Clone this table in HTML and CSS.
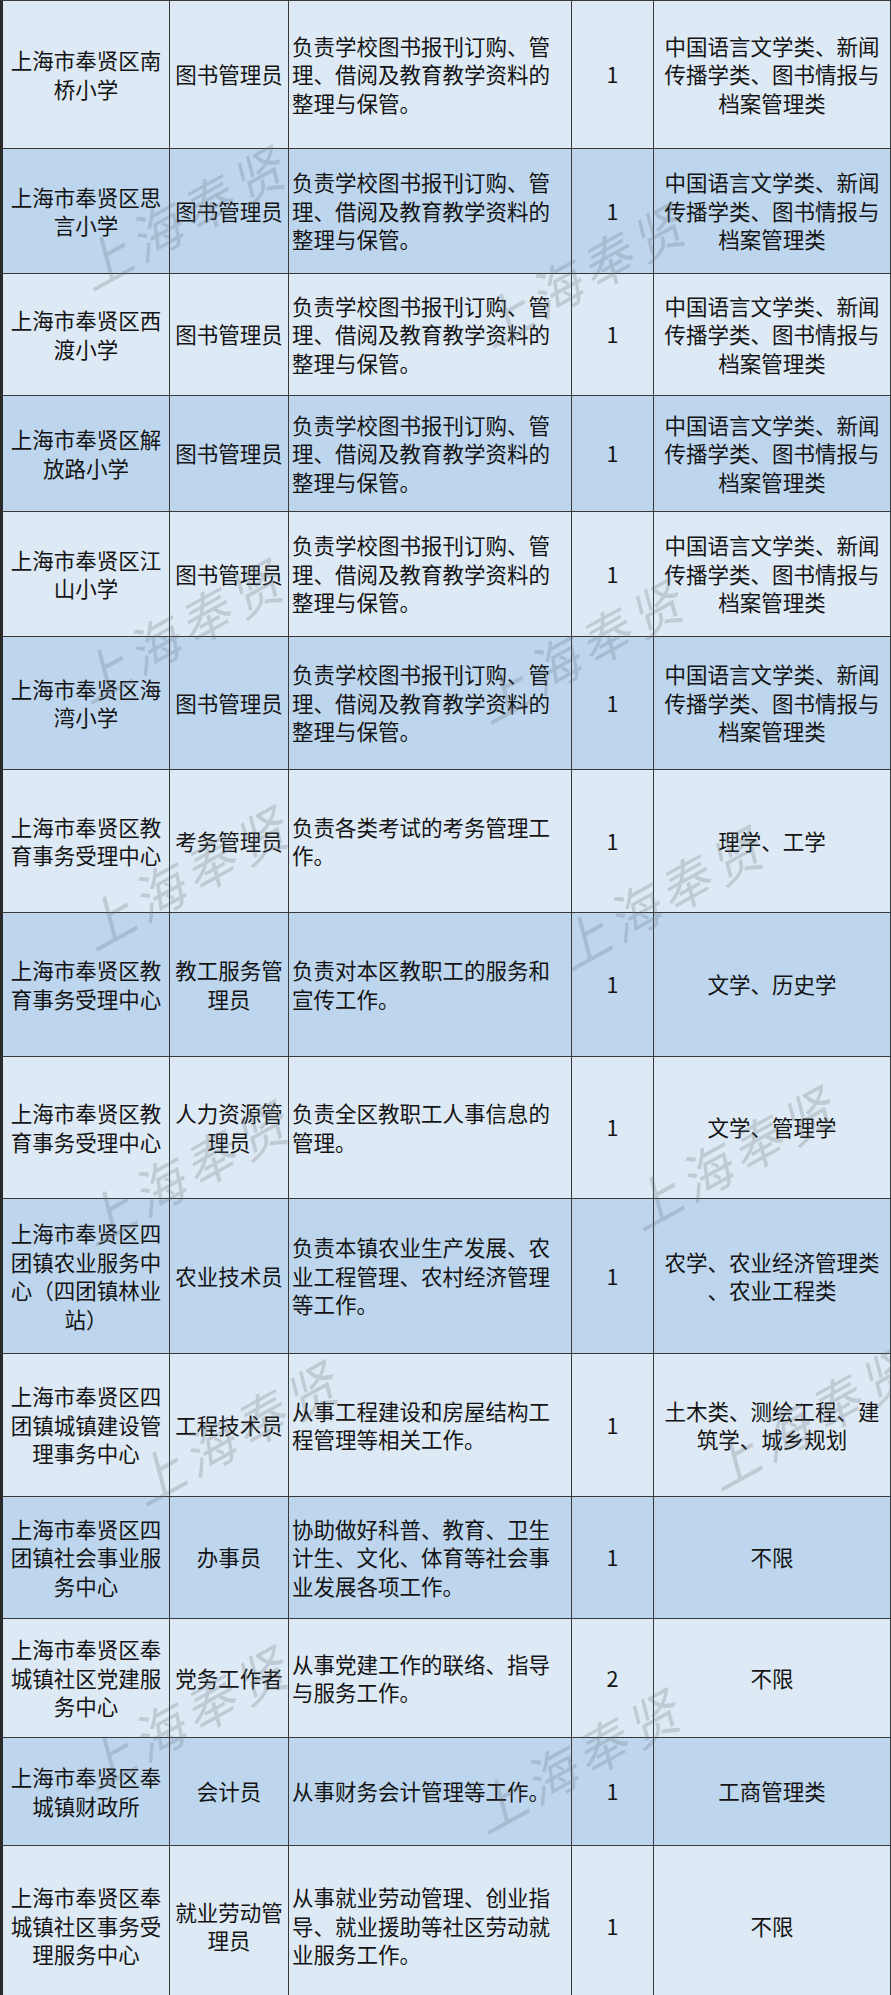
FILE: index.html
```html
<!DOCTYPE html>
<html lang="zh-CN">
<head>
<meta charset="utf-8">
<title>岗位表</title>
<link rel="stylesheet" href="styles.css">
</head>
<body>
<div class="sheet">
  <div class="row light r1">
    <div class="c c1">上海市奉贤区南<br>桥小学</div>
    <div class="c c2">图书管理员</div>
    <div class="c c3">负责学校图书报刊订购、管<br>理、借阅及教育教学资料的<br>整理与保管。</div>
    <div class="c c4">1</div>
    <div class="c c5">中国语言文学类、新闻<br>传播学类、图书情报与<br>档案管理类</div>
  </div>
  <div class="row dark r2">
    <div class="c c1">上海市奉贤区思<br>言小学</div>
    <div class="c c2">图书管理员</div>
    <div class="c c3">负责学校图书报刊订购、管<br>理、借阅及教育教学资料的<br>整理与保管。</div>
    <div class="c c4">1</div>
    <div class="c c5">中国语言文学类、新闻<br>传播学类、图书情报与<br>档案管理类</div>
  </div>
  <div class="row light r3">
    <div class="c c1">上海市奉贤区西<br>渡小学</div>
    <div class="c c2">图书管理员</div>
    <div class="c c3">负责学校图书报刊订购、管<br>理、借阅及教育教学资料的<br>整理与保管。</div>
    <div class="c c4">1</div>
    <div class="c c5">中国语言文学类、新闻<br>传播学类、图书情报与<br>档案管理类</div>
  </div>
  <div class="row dark r4">
    <div class="c c1">上海市奉贤区解<br>放路小学</div>
    <div class="c c2">图书管理员</div>
    <div class="c c3">负责学校图书报刊订购、管<br>理、借阅及教育教学资料的<br>整理与保管。</div>
    <div class="c c4">1</div>
    <div class="c c5">中国语言文学类、新闻<br>传播学类、图书情报与<br>档案管理类</div>
  </div>
  <div class="row light r5">
    <div class="c c1">上海市奉贤区江<br>山小学</div>
    <div class="c c2">图书管理员</div>
    <div class="c c3">负责学校图书报刊订购、管<br>理、借阅及教育教学资料的<br>整理与保管。</div>
    <div class="c c4">1</div>
    <div class="c c5">中国语言文学类、新闻<br>传播学类、图书情报与<br>档案管理类</div>
  </div>
  <div class="row dark r6">
    <div class="c c1">上海市奉贤区海<br>湾小学</div>
    <div class="c c2">图书管理员</div>
    <div class="c c3">负责学校图书报刊订购、管<br>理、借阅及教育教学资料的<br>整理与保管。</div>
    <div class="c c4">1</div>
    <div class="c c5">中国语言文学类、新闻<br>传播学类、图书情报与<br>档案管理类</div>
  </div>
  <div class="row light r7">
    <div class="c c1">上海市奉贤区教<br>育事务受理中心</div>
    <div class="c c2">考务管理员</div>
    <div class="c c3">负责各类考试的考务管理工<br>作。</div>
    <div class="c c4">1</div>
    <div class="c c5">理学、工学</div>
  </div>
  <div class="row dark r8">
    <div class="c c1">上海市奉贤区教<br>育事务受理中心</div>
    <div class="c c2">教工服务管<br>理员</div>
    <div class="c c3">负责对本区教职工的服务和<br>宣传工作。</div>
    <div class="c c4">1</div>
    <div class="c c5">文学、历史学</div>
  </div>
  <div class="row light r9">
    <div class="c c1">上海市奉贤区教<br>育事务受理中心</div>
    <div class="c c2">人力资源管<br>理员</div>
    <div class="c c3">负责全区教职工人事信息的<br>管理。</div>
    <div class="c c4">1</div>
    <div class="c c5">文学、管理学</div>
  </div>
  <div class="row dark r10">
    <div class="c c1">上海市奉贤区四<br>团镇农业服务中<br>心（四团镇林业<br>站）</div>
    <div class="c c2">农业技术员</div>
    <div class="c c3">负责本镇农业生产发展、农<br>业工程管理、农村经济管理<br>等工作。</div>
    <div class="c c4">1</div>
    <div class="c c5">农学、农业经济管理类<br>、农业工程类</div>
  </div>
  <div class="row light r11">
    <div class="c c1">上海市奉贤区四<br>团镇城镇建设管<br>理事务中心</div>
    <div class="c c2">工程技术员</div>
    <div class="c c3">从事工程建设和房屋结构工<br>程管理等相关工作。</div>
    <div class="c c4">1</div>
    <div class="c c5">土木类、测绘工程、建<br>筑学、城乡规划</div>
  </div>
  <div class="row dark r12">
    <div class="c c1">上海市奉贤区四<br>团镇社会事业服<br>务中心</div>
    <div class="c c2">办事员</div>
    <div class="c c3">协助做好科普、教育、卫生<br>计生、文化、体育等社会事<br>业发展各项工作。</div>
    <div class="c c4">1</div>
    <div class="c c5">不限</div>
  </div>
  <div class="row light r13">
    <div class="c c1">上海市奉贤区奉<br>城镇社区党建服<br>务中心</div>
    <div class="c c2">党务工作者</div>
    <div class="c c3">从事党建工作的联络、指导<br>与服务工作。</div>
    <div class="c c4">2</div>
    <div class="c c5">不限</div>
  </div>
  <div class="row dark r14">
    <div class="c c1">上海市奉贤区奉<br>城镇财政所</div>
    <div class="c c2">会计员</div>
    <div class="c c3">从事财务会计管理等工作。</div>
    <div class="c c4">1</div>
    <div class="c c5">工商管理类</div>
  </div>
  <div class="row light r15">
    <div class="c c1">上海市奉贤区奉<br>城镇社区事务受<br>理服务中心</div>
    <div class="c c2">就业劳动管<br>理员</div>
    <div class="c c3">从事就业劳动管理、创业指<br>导、就业援助等社区劳动就<br>业服务工作。</div>
    <div class="c c4">1</div>
    <div class="c c5">不限</div>
  </div>

  <span class="wm wm1">上海奉贤</span>
  <span class="wm wm2">上海奉贤</span>
  <span class="wm wm3">上海奉贤</span>
  <span class="wm wm4">上海奉贤</span>
  <span class="wm wm5">上海奉贤</span>
  <span class="wm wm6">上海奉贤</span>
  <span class="wm wm7">上海奉贤</span>
  <span class="wm wm8">上海奉贤</span>
  <span class="wm wm9">上海奉贤</span>
  <span class="wm wm10">上海奉贤</span>
  <span class="wm wm11">上海奉贤</span>
  <span class="wm wm12">上海奉贤</span>
</div>
</body>
</html>
```

FILE: styles.css
```css
html, body {
  margin: 0;
  padding: 0;
  background: #dde9f5;
}

body {
  width: 891px;
  height: 1995px;
  overflow: hidden;
  font-family: "Noto Sans CJK SC", "Noto Sans", sans-serif;
  color: #141414;
}

.sheet {
  position: relative;
  width: 891px;
  height: 1995px;
  overflow: hidden;
  border-top: 1px solid #3a3a3a;
  box-sizing: border-box;
}

.row {
  display: grid;
  grid-template-columns: 170px 119px 283px 82px 237px;
  box-sizing: border-box;
}

.light { background: #dde9f5; }
.dark { background: #bdd6ee; }

.c {
  box-sizing: border-box;
  border-right: 1px solid #3a3a3a;
  border-bottom: 1px solid #3a3a3a;
  display: flex;
  align-items: center;
  justify-content: center;
  text-align: center;
  font-size: 21.5px;
  line-height: 28.5px;
  white-space: nowrap;
  overflow: hidden;
}

.c1 {
  border-left: 3px solid #2a2a2a;
}

.c3 {
  justify-content: flex-start;
  text-align: left;
  padding-left: 3px;
}

.r1 { height: 148px; }
.r2 { height: 125px; }
.r3 { height: 122px; }
.r4 { height: 116px; }
.r5 { height: 125px; }
.r6 { height: 133px; }
.r7 { height: 143px; }
.r8 { height: 144px; }
.r9 { height: 142px; }
.r10 { height: 155px; }
.r11 { height: 143px; }
.r12 { height: 122px; }
.r13 { height: 119px; }
.r14 { height: 108px; }
.r15 { height: 160px; }
.r15 .c { border-bottom: none; }

.wm {
  position: absolute;
  width: 240px;
  height: 56px;
  margin-left: -120px;
  margin-top: -28px;
  font-family: "Noto Sans CJK SC", sans-serif;
  font-size: 52px;
  line-height: 56px;
  font-weight: 400;
  font-style: italic;
  letter-spacing: 6px;
  text-align: center;
  white-space: nowrap;
  color: rgba(105, 115, 125, 0.26);
  transform: rotate(-29deg);
  pointer-events: none;
}

.wm1 { left: 182px; top: 215px; }
.wm2 { left: 582px; top: 272px; }
.wm3 { left: 180px; top: 628px; }
.wm4 { left: 580px; top: 648px; }
.wm5 { left: 185px; top: 875px; }
.wm6 { left: 660px; top: 895px; }
.wm7 { left: 185px; top: 1170px; }
.wm8 { left: 732px; top: 1155px; }
.wm9 { left: 235px; top: 1430px; }
.wm10 { left: 810px; top: 1415px; }
.wm11 { left: 185px; top: 1715px; }
.wm12 { left: 577px; top: 1758px; }
```
